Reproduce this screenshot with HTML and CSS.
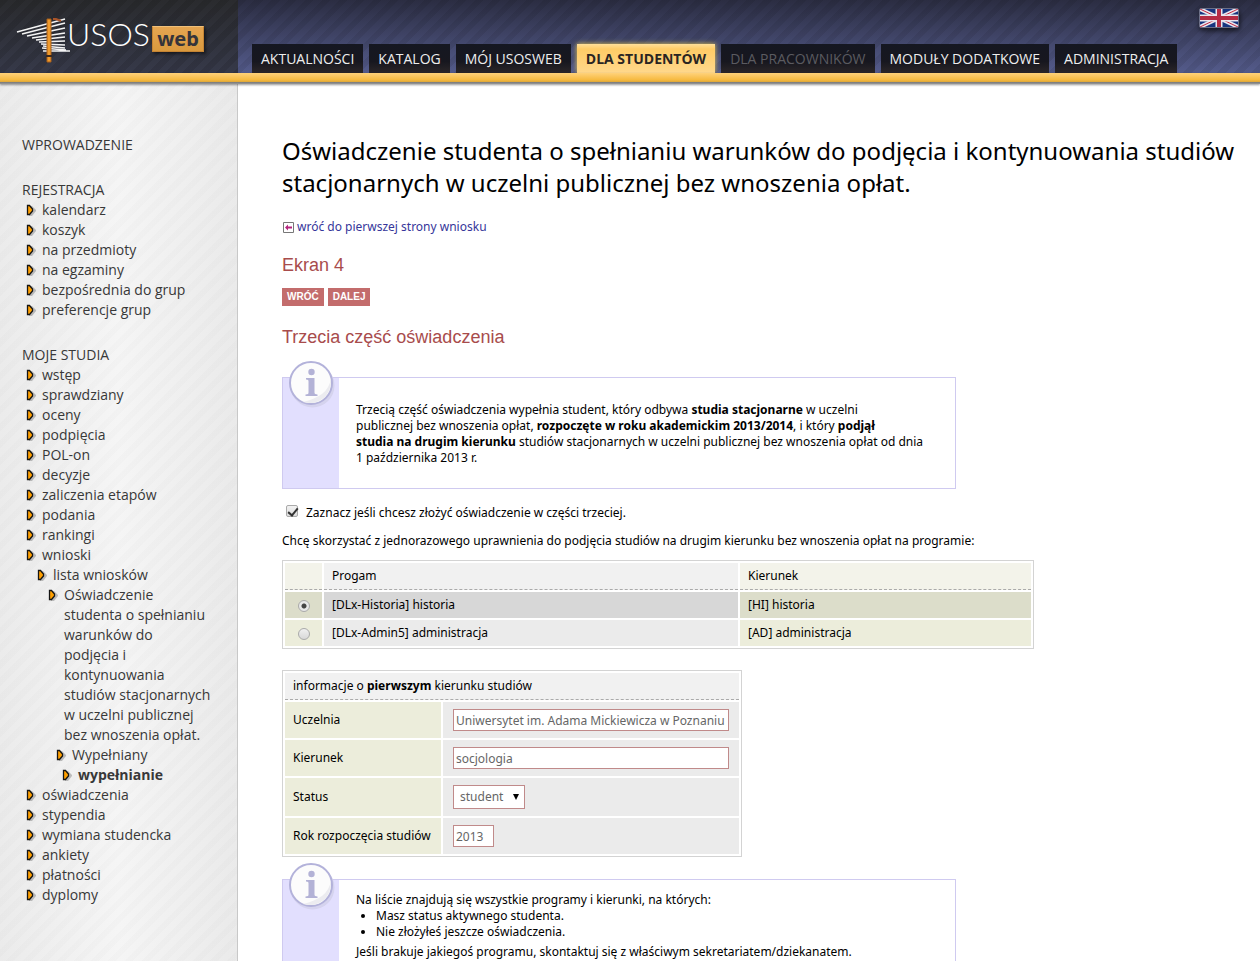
FILE: index.html
```
<!DOCTYPE html>
<html lang="pl">
<head>
<meta charset="utf-8">
<title>USOSweb – Oświadczenie studenta</title>
<link rel="stylesheet" href="styles.css">
</head>
<body>
<svg class="defs" aria-hidden="true">
  <symbol id="arrow" viewBox="0 0 12 14">
    <path class="arrow-shadow" d="M3 3h3l4 4v1l-4 5H3z"/>
    <path class="arrow-body" d="M1.500 2.500h2l3 3.500v2l-3 3.500h-2z"/>
  </symbol>
  <symbol id="info" viewBox="0 0 54 54">
    <ellipse cx="28.500" cy="27.500" rx="22" ry="22" fill="#d5d3ee"/>
    <circle cx="27" cy="25" r="21" fill="#fcfcfc" stroke="#b3b2da" stroke-width="2"/>
    <path d="M47 20c-2 14-12 20-28 24c14 4 27-4 28-20z" fill="#ececf0"/>
    <circle cx="27.500" cy="14" r="3.200" fill="#b3b2d6"/>
    <path d="M22 20h8.500v14.500c0 1.500 1 1.800 3 2v1.500H21.500v-1.500c2.500-.2 3-.5 3-2V23.500c0-1.500-.5-1.800-2.500-2z" fill="#b3b2d6"/>
  </symbol>
</svg>
<header class="top">
  <a class="logo" href="#" aria-label="USOSweb">
    <svg class="logo-mark" width="51" height="50" viewBox="0 0 51 50" aria-hidden="true">
      <g stroke="#f4f4f4" stroke-width="1.500" fill="none">
        <path d="M1 16 49 3M6 18 49 7M11 20 49 12M16 22 49 17M20 24 49 21M23 26 49 25M25 28 49 29M27 30 49 32M26 32 50 34M27 35 54 35"/>
      </g>
      <path d="M37 3l3 0 5 2" stroke="#a8542a" stroke-width="2" fill="none"/>
      <path d="M31 3h4v43h-4z" fill="#ef9a2c" stroke="#a85f1b"/>
      <path d="M30 40h6" stroke="#3b2a20" stroke-width="2"/>
    </svg>
    <span class="logo-name">USOS</span><span class="logo-web">web</span>
  </a>
  <nav class="tabs">
    <a class="tab" href="#">AKTUALNOŚCI</a>
    <a class="tab" href="#">KATALOG</a>
    <a class="tab" href="#">MÓJ USOSWEB</a>
    <a class="tab active" href="#">DLA STUDENTÓW</a>
    <a class="tab muted" href="#">DLA PRACOWNIKÓW</a>
    <a class="tab" href="#">MODUŁY DODATKOWE</a>
    <a class="tab" href="#">ADMINISTRACJA</a>
  </nav>
  <a class="flag" href="#" aria-label="English">
    <svg width="38" height="18" viewBox="0 0 38 18" aria-hidden="true">
      <path d="M0 0h38v18H0z" fill="#17357f"/>
      <path d="M0 0 38 18M38 0 0 18" stroke="#e8e6ee" stroke-width="4"/>
      <path d="M0 0 38 18M38 0 0 18" stroke="#c42a42" stroke-width="1"/>
      <path d="M19 0v18M0 9h38" stroke="#e8e6ee" stroke-width="7"/>
      <path d="M19 0v18M0 9h38" stroke="#b52c45" stroke-width="4"/>
    </svg>
  </a>
</header>
<div class="gold"></div>
<div class="page">
  <aside class="side">
    <section><a class="head" href="#">WPROWADZENIE</a></section>
    <section>
      <a class="head" href="#">REJESTRACJA</a>
      <ul class="menu">
        <li><svg><use href="#arrow"/></svg><a href="#">kalendarz</a></li>
        <li><svg><use href="#arrow"/></svg><a href="#">koszyk</a></li>
        <li><svg><use href="#arrow"/></svg><a href="#">na przedmioty</a></li>
        <li><svg><use href="#arrow"/></svg><a href="#">na egzaminy</a></li>
        <li><svg><use href="#arrow"/></svg><a href="#">bezpośrednia do grup</a></li>
        <li><svg><use href="#arrow"/></svg><a href="#">preferencje grup</a></li>
      </ul>
    </section>
    <section>
      <a class="head" href="#">MOJE STUDIA</a>
      <ul class="menu">
        <li><svg><use href="#arrow"/></svg><a href="#">wstęp</a></li>
        <li><svg><use href="#arrow"/></svg><a href="#">sprawdziany</a></li>
        <li><svg><use href="#arrow"/></svg><a href="#">oceny</a></li>
        <li><svg><use href="#arrow"/></svg><a href="#">podpięcia</a></li>
        <li><svg><use href="#arrow"/></svg><a href="#">POL-on</a></li>
        <li><svg><use href="#arrow"/></svg><a href="#">decyzje</a></li>
        <li><svg><use href="#arrow"/></svg><a href="#">zaliczenia etapów</a></li>
        <li><svg><use href="#arrow"/></svg><a href="#">podania</a></li>
        <li><svg><use href="#arrow"/></svg><a href="#">rankingi</a></li>
        <li><svg><use href="#arrow"/></svg><a href="#">wnioski</a></li>
        <li class="level2"><svg><use href="#arrow"/></svg><a href="#">lista wniosków</a></li>
        <li class="level3"><svg><use href="#arrow"/></svg><a href="#">Oświadczenie studenta o spełnianiu warunków do podjęcia i kontynuowania studiów stacjonarnych w uczelni publicznej bez wnoszenia opłat.</a></li>
        <li class="level4"><svg><use href="#arrow"/></svg><a href="#">Wypełniany</a></li>
        <li class="level5"><svg><use href="#arrow"/></svg><a href="#">wypełnianie</a></li>
        <li><svg><use href="#arrow"/></svg><a href="#">oświadczenia</a></li>
        <li><svg><use href="#arrow"/></svg><a href="#">stypendia</a></li>
        <li><svg><use href="#arrow"/></svg><a href="#">wymiana studencka</a></li>
        <li><svg><use href="#arrow"/></svg><a href="#">ankiety</a></li>
        <li><svg><use href="#arrow"/></svg><a href="#">płatności</a></li>
        <li><svg><use href="#arrow"/></svg><a href="#">dyplomy</a></li>
      </ul>
    </section>
  </aside>
  <main class="content">
    <h1>Oświadczenie studenta o spełnianiu warunków do podjęcia i kontynuowania studiów stacjonarnych w uczelni publicznej bez wnoszenia opłat.</h1>
    <a class="back" href="#">
      <svg width="11" height="11" viewBox="0 0 11 11" aria-hidden="true">
        <path d="M.5.5h10v10H.5z" fill="#fff" stroke="#777"/>
        <path d="M2 5.500 5 2.500v2h4v2H5v2z" fill="#b5267e"/>
      </svg>
      wróć do pierwszej strony wniosku
    </a>
    <h2>Ekran 4</h2>
    <div class="buttons">
      <button type="button">WRÓĆ</button>
      <button type="button">DALEJ</button>
    </div>
    <h2>Trzecia część oświadczenia</h2>
    <div class="note tall">
      <div class="note-side"><svg class="note-icon"><use href="#info"/></svg></div>
      <div class="note-text">Trzecią część oświadczenia wypełnia student, który odbywa <b>studia stacjonarne</b> w uczelni<br>publicznej bez wnoszenia opłat, <b>rozpoczęte w roku akademickim 2013/2014</b>, i który <b>podjął<br>studia na drugim kierunku</b> studiów stacjonarnych w uczelni publicznej bez wnoszenia opłat od dnia 1&nbsp;października 2013 r.</div>
    </div>
    <div class="confirm">
      <input type="checkbox" id="third" checked>
      <label for="third">Zaznacz jeśli chcesz złożyć oświadczenie w części trzeciej.</label>
    </div>
    <p class="lead">Chcę skorzystać z jednorazowego uprawnienia do podjęcia studiów na drugim kierunku bez wnoszenia opłat na programie:</p>
    <table class="grid programs">
      <thead>
        <tr><th class="pick"></th><th class="program">Progam</th><th>Kierunek</th></tr>
      </thead>
      <tbody>
        <tr class="selected"><td class="pick"><input type="radio" name="program" id="p1" checked></td><td><label for="p1">[DLx-Historia] historia</label></td><td>[HI] historia</td></tr>
        <tr><td class="pick"><input type="radio" name="program" id="p2"></td><td><label for="p2">[DLx-Admin5] administracja</label></td><td>[AD] administracja</td></tr>
      </tbody>
    </table>
    <table class="grid details">
      <thead>
        <tr><th colspan="2">informacje o <b>pierwszym</b> kierunku studiów</th></tr>
      </thead>
      <tbody>
        <tr><td class="name"><label for="school">Uczelnia</label></td><td><input class="field" type="text" id="school" value="Uniwersytet im. Adama Mickiewicza w Poznaniu"></td></tr>
        <tr><td class="name"><label for="course">Kierunek</label></td><td><input class="field" type="text" id="course" value="socjologia"></td></tr>
        <tr class="status"><td class="name"><label for="status">Status</label></td><td><span class="select"><select id="status"><option>student</option></select></span></td></tr>
        <tr><td class="name"><label for="year">Rok rozpoczęcia studiów</label></td><td><input class="field year" type="text" id="year" value="2013"></td></tr>
      </tbody>
    </table>
    <div class="note">
      <div class="note-side"><svg class="note-icon"><use href="#info"/></svg></div>
      <div class="note-text">Na liście znajdują się wszystkie programy i kierunki, na których:
        <ul>
          <li>Masz status aktywnego studenta.</li>
          <li>Nie złożyłeś jeszcze oświadczenia.</li>
        </ul>
        <p>Jeśli brakuje jakiegoś programu, skontaktuj się z właściwym sekretariatem/dziekanatem.</p>
      </div>
    </div>
  </main>
</div>
</body>
</html>
```
FILE: styles.css
```
* { box-sizing: border-box; }
html { overflow: hidden; }
body {
  margin: 0;
  min-height: 100vh;
  display: flex;
  flex-direction: column;
  background: #fff;
  color: #000;
  font: 12px/16px "Noto Sans", sans-serif;
}
a { text-decoration: none; }
.defs { display: none; }

.top {
  display: flex;
  height: 73px;
  background:
    repeating-linear-gradient(135deg, rgba(0,0,0,.07) 0 6px, transparent 6px 12px),
    linear-gradient(#2b2d42, #545b8b);
}
.logo {
  display: flex;
  align-items: flex-start;
  width: 238px;
  padding: 16px 0 0 16px;
  background:
    repeating-linear-gradient(135deg, rgba(0,0,0,.1) 0 6px, transparent 6px 12px),
    linear-gradient(#2a2b2e, #363949);
}
.logo-mark { flex: none; overflow: visible; }
.logo-name {
  width: 85px;
  color: #fff;
  font: 300 32px/36px Lato, sans-serif;
}
.logo-web {
  width: 52px;
  height: 26px;
  margin-top: 10px;
  background: linear-gradient(#e5a551, #d9993e);
  border: 1px solid #c58433;
  border-top-color: #f0c07a;
  box-shadow: 2px 2px 3px rgba(0,0,0,.5);
  color: #35343a;
  font: 700 20px/24px "Noto Sans", sans-serif;
  text-align: center;
}
.tabs {
  display: flex;
  flex: 1;
  align-items: flex-end;
  gap: 6px;
  padding-left: 14px;
}
.tab {
  height: 29px;
  padding: 0 9px;
  background: linear-gradient(#151721, #17171f 60%, #2b2628);
  color: #eee;
  font: 14px/30px "Open Sans", sans-serif;
  white-space: nowrap;
}
.tab.active {
  background: linear-gradient(#ffdf9a, #ffcc66 5px, #ffd88c);
  box-shadow: 0 0 5px #e6c750;
  color: #2a2522;
  font-weight: 700;
}
.tab.muted { color: #5b5b60; }
.flag {
  align-self: flex-start;
  margin: 8px 21px 0 0;
  border: 1px solid #6d7087;
  border-radius: 2px;
  box-shadow: 1px 3px 5px rgba(0,0,0,.6);
  line-height: 0;
}
.gold {
  position: relative;
  height: 11px;
  background: linear-gradient(#ffd27a, #f6b93f 7px, #dda638 9px, #777 9px, #999);
  box-shadow: 0 1px 2px rgba(0,0,0,.4);
}

.page { display: flex; flex: 1; }
.side {
  width: 238px;
  flex: none;
  padding: 51px 26px 40px 22px;
  border-right: 1px solid #c8c8c8;
  background:
    repeating-linear-gradient(135deg, rgba(0,0,0,.012) 0 6px, transparent 6px 12px),
    linear-gradient(90deg, #ebebeb, #f5f5f5 50%, #eaeaea);
  font: 14px/20px "Open Sans", sans-serif;
}
.side a { color: #383838; }
.side section { margin-bottom: 25px; }
.head { display: block; }
.menu { margin: 0; padding: 0; list-style: none; }
.menu li { display: flex; padding-left: 4px; }
.menu li.level2 { padding-left: 15px; }
.menu li.level3 { padding-left: 26px; }
.menu li.level4 { padding-left: 34px; }
.menu li.level5 { padding-left: 40px; font-weight: 700; }
.menu svg { flex: none; width: 12px; height: 14px; margin: 3px 4px 0 0; }
.arrow-body { fill: #ffa000; stroke: #151515; stroke-width: 1.3; }
.arrow-shadow { fill: rgba(0,0,0,.22); }

.content { flex: 1; min-width: 0; padding: 51px 20px 0 44px; }
h1 {
  margin: 0 0 20px;
  font: 24px/32px "Noto Sans", sans-serif;
}
.back { display: flex; align-items: center; gap: 3px; padding-left: 1px; color: #36369a; }
h2 { margin: 20px 0 13px; color: #a84c4c; font: 18px/20px "Liberation Sans", sans-serif; }
.buttons { display: flex; gap: 4px; margin-bottom: 21px; }
button {
  height: 18px;
  padding: 0 5px;
  border: 0;
  background: #c36c6c;
  color: #fff;
  font: 700 10px/18px "Liberation Sans", sans-serif;
}
.note {
  display: flex;
  max-width: 674px;
  margin-top: 22px;
  border: 1px solid #cfcaf0;
}
.note.tall { margin-top: 30px; }
.note-side { position: relative; flex: none; width: 56px; background: #e2dffe; }
.note-icon { position: absolute; left: 1px; top: -20px; width: 54px; height: 54px; }
.note-text { padding: 12px 15px 30px 17px; }
.tall .note-text { padding: 24px 15px 22px 17px; }
.note ul { margin: 0; padding-left: 20px; }
.note p { margin: 4px 0 0; }
.confirm { display: flex; align-items: center; gap: 8px; margin-top: 16px; padding-left: 4px; }
input[type="checkbox"] {
  appearance: none;
  width: 12px;
  height: 12px;
  margin: 0 0 4px;
  border: 1px solid #aaa;
  border-radius: 2px;
  background: linear-gradient(#f2f2f2, #ddd);
}
input[type="checkbox"]::after {
  content: "";
  display: block;
  width: 4px;
  height: 8px;
  margin: 0 0 0 3px;
  border: solid #333;
  border-width: 0 2px 2px 0;
  transform: rotate(40deg);
}
.lead { margin: 12px 0 11px; }

.grid {
  width: 100%;
  border: 1px solid #d3d3d3;
  border-collapse: separate;
  border-spacing: 2px;
}
.grid th, .grid td { padding: 5px 8px; background: #ebebeb; text-align: left; font-weight: 400; }
.grid th { background: #f1f1f1; border-bottom: 1px dashed #aaa; }
.programs { max-width: 752px; }
.grid .pick { width: 37px; padding: 0; text-align: center; }
.programs .program { width: 414px; }
.programs th:nth-child(odd) { background: #f3f3ea; }
.programs td:nth-child(odd) { background: #eceddb; }
.programs .selected td { background: #d7d7d7; }
.programs .selected td:nth-child(odd) { background: #dcddca; }
input[type="radio"] {
  appearance: none;
  width: 12px;
  height: 12px;
  margin: 0;
  border: 1px solid #aaa;
  border-radius: 50%;
  background: linear-gradient(#f0f0f0, #d8d8d8);
  vertical-align: middle;
}
input[type="radio"]:checked { background: radial-gradient(#444 0 2px, #e8e8e8 3px); }
.details { max-width: 460px; margin-top: 21px; }
.grid.details td { height: 36px; padding: 0 10px; white-space: nowrap; }
.grid.details .name { width: 156px; padding: 0 8px; background: #eceddb; }
.grid.details .status td { height: 38px; }
.field {
  width: 276px;
  height: 22px;
  padding: 0 2px;
  border: 1px solid #c08a8a;
  background: #fff;
  color: #666;
  font: inherit;
  vertical-align: middle;
}
.field.year { width: 41px; }
.select {
  display: inline-block;
  position: relative;
  vertical-align: middle;
}
.select::after {
  content: "";
  position: absolute;
  right: 6px;
  top: 9px;
  border: solid transparent;
  border-width: 6px 3px 0;
  border-top-color: #000;
}
select {
  appearance: none;
  display: block;
  width: 72px;
  height: 24px;
  padding: 0 6px;
  border: 1px solid #c08a8a;
  border-radius: 0;
  background: #fff;
  color: #666;
  font: inherit;
}
```
